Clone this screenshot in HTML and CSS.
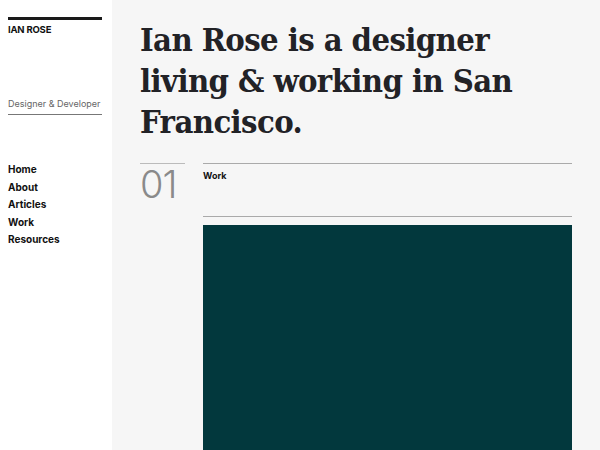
FILE: index.html
```html
<!DOCTYPE html>
<html>
<head>
<meta charset="utf-8">
<link rel="stylesheet" href="styles.css">
</head>
<body>
<div class="page">
  <aside class="sidebar">
    <div class="brand">IAN ROSE</div>
    <div class="tagline">Designer &amp; Developer</div>
    <nav class="nav">
      <a href="#">Home</a>
      <a href="#">About</a>
      <a href="#">Articles</a>
      <a href="#">Work</a>
      <a href="#">Resources</a>
    </nav>
  </aside>
  <main class="main">
    <h1 class="headline">Ian Rose is a designer living &amp; working in San Francisco.</h1>
    <section class="section">
      <div class="num">01</div>
      <div class="body">
        <div class="section-head">Work</div>
        <div class="card"></div>
      </div>
    </section>
  </main>
</div>
</body>
</html>
```
FILE: styles.css
```css
* { box-sizing: border-box; }
html, body { margin: 0; padding: 0; height: 100%; }
body { font-family: Inter, "Liberation Sans", sans-serif; background: #fff; color: #111; overflow: hidden; }
.page { display: flex; height: 450px; }
.sidebar { width: 112px; flex: none; padding: 17px 10px 0 8px; background: #fff; }
.brand { border-top: 3px solid #1a1a1a; padding-top: 3px; font-size: 9.5px; font-weight: 700; letter-spacing: -0.2px; line-height: 14px; }
.tagline { margin-top: 60px; font-size: 9px; color: #666; line-height: 14px; padding-bottom: 3px; border-bottom: 1px solid #777; white-space: nowrap; }
.nav { display: flex; flex-direction: column; margin-top: 46px; }
.nav a { color: #111; text-decoration: none; font-size: 10px; font-weight: 700; line-height: 17.5px; }
.main { flex: 1; background: #f6f6f6; padding: 19px 28px 0 28px; }
.headline { margin: 0; font-family: "DejaVu Serif", serif; font-stretch: condensed; font-weight: 700; font-size: 32.5px; line-height: 41px; color: #222226; letter-spacing: -0.6px; }
.section { display: grid; grid-template-columns: 45px 1fr; column-gap: 18px; margin-top: 21px; }
.num { border-top: 1px solid #bbb; font-size: 38px; font-weight: 300; color: #8a8a8a; line-height: 40px; padding-top: 0; letter-spacing: -1px; }
.body { border-top: 1px solid #aaa; }
.section-head { font-size: 9px; font-weight: 700; padding-top: 6px; height: 53px; border-bottom: 1px solid #aaa; }
.card { margin-top: 8px; height: 240px; background: #02383d; }
```
